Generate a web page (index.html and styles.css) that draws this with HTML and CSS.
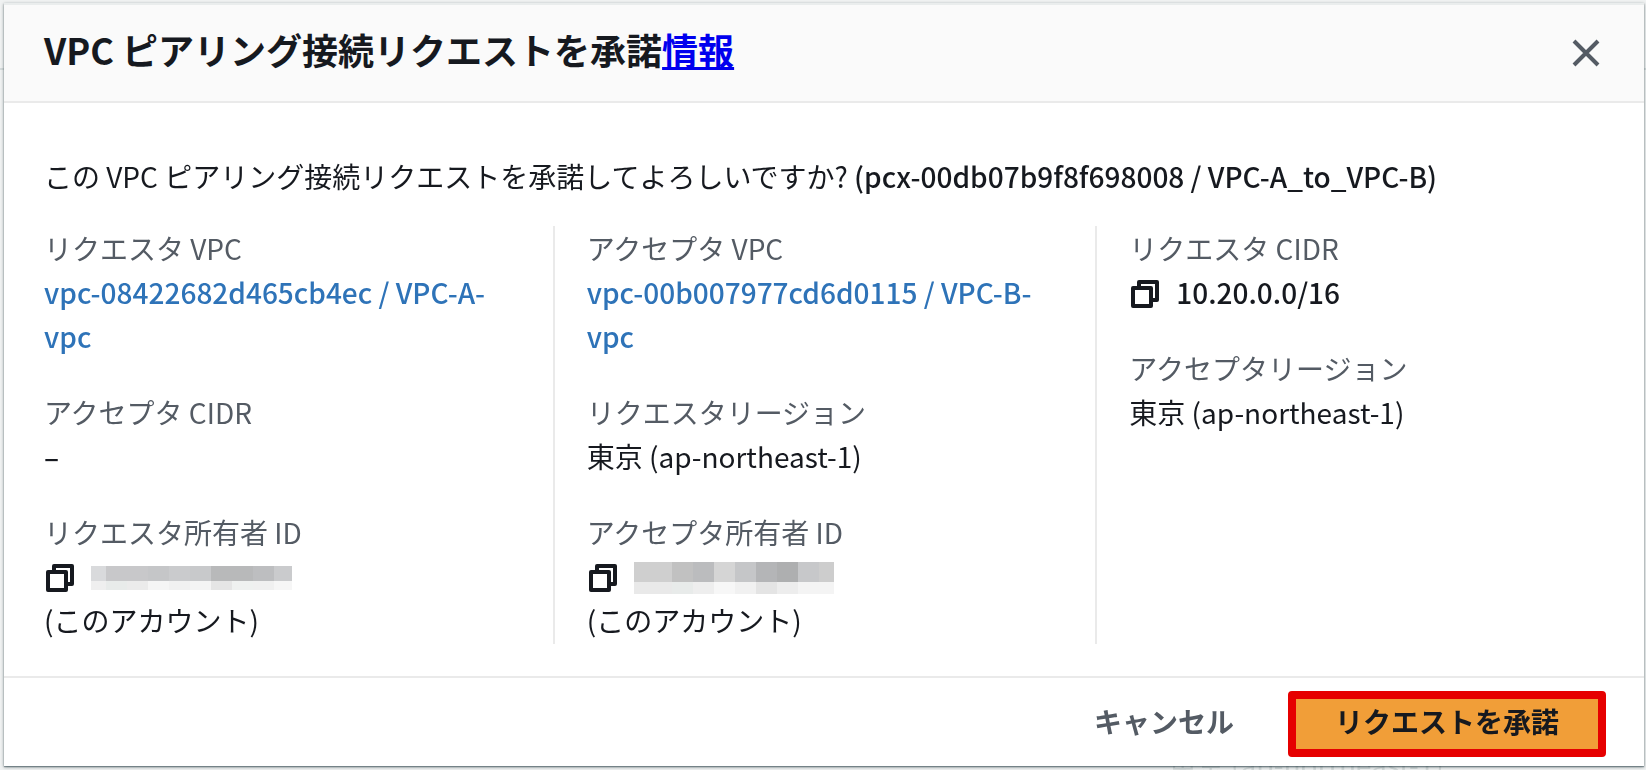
FILE: index.html
```
<!DOCTYPE html>
<html lang="ja">
<head>
    <meta charset="UTF-8">
    <meta name="viewport" content="width=device-width, initial-scale=1.0">
    <title>VPC ピアリング接続リクエストを承諾</title>
    <link rel="stylesheet" href="styles.css">
</head>
<body>
    <svg class="sprite" aria-hidden="true">
        <symbol id="copy" viewBox="0 0 32 32">
            <path d="M10 11V4h18v18h-6M4 10h18v18H4z"/>
        </symbol>
    </svg>

    <!-- page content showing from behind the dialog -->
    <div class="behind" aria-hidden="true">東京 (ap-northeast-1)</div>

    <div class="modal" role="dialog" aria-labelledby="title">
        <header class="modal-header">
            <h1 id="title">VPC ピアリング接続リクエストを承諾<a href="#">情報</a></h1>
            <button class="close" type="button" aria-label="閉じる">
                <svg viewBox="0 0 32 32"><path d="M4 4l24 24M28 4L4 28"/></svg>
            </button>
        </header>

        <main class="modal-body">
            <p class="question">この VPC ピアリング接続リクエストを承諾してよろしいですか? <span class="value">(pcx-00db07b9f8f698008 / VPC-A_to_VPC-B)</span></p>

            <div class="columns">
                <dl class="column">
                    <div>
                        <dt>リクエスタ VPC</dt>
                        <dd><a href="#">vpc-08422682d465cb4ec / VPC-A-vpc</a></dd>
                    </div>
                    <div>
                        <dt>アクセプタ CIDR</dt>
                        <dd class="value">–</dd>
                    </div>
                    <div>
                        <dt>リクエスタ所有者 ID</dt>
                        <dd class="copyable">
                            <button class="copy" type="button" aria-label="コピー"><svg><use href="#copy"/></svg></button>
                            <svg class="masked" width="201" height="24" aria-hidden="true">
                                <rect x="0" width="15" height="15" fill="#d9dadc"/>
                                <rect x="15" width="42" height="15" fill="#c8c8ca"/>
                                <rect x="57" width="21" height="15" fill="#c5c6c8"/>
                                <rect x="78" width="21" height="15" fill="#cacbcd"/>
                                <rect x="99" width="21" height="15" fill="#c8c9cb"/>
                                <rect x="120" width="42" height="15" fill="#b8b9ba"/>
                                <rect x="162" width="21" height="15" fill="#bdbec0"/>
                                <rect x="183" width="18" height="15" fill="#cacbcd"/>
                                <rect x="0" y="15" width="15" height="9" fill="#efefef"/>
                                <rect x="15" y="15" width="21" height="9" fill="#e8ebea"/>
                                <rect x="36" y="15" width="21" height="9" fill="#ebebeb"/>
                                <rect x="57" y="15" width="21" height="9" fill="#f5f5f5"/>
                                <rect x="78" y="15" width="21" height="9" fill="#f1f1f1"/>
                                <rect x="99" y="15" width="21" height="9" fill="#f4f4f4"/>
                                <rect x="120" y="15" width="21" height="9" fill="#e5e5e5"/>
                                <rect x="141" y="15" width="21" height="9" fill="#eff1f0"/>
                                <rect x="162" y="15" width="21" height="9" fill="#f0f0f0"/>
                                <rect x="183" y="15" width="18" height="9" fill="#f6f6f6"/>
                            </svg>
                        </dd>
                        <dd>(このアカウント)</dd>
                    </div>
                </dl>

                <dl class="column">
                    <div>
                        <dt>アクセプタ VPC</dt>
                        <dd><a href="#">vpc-00b007977cd6d0115 / VPC-B-vpc</a></dd>
                    </div>
                    <div>
                        <dt>リクエスタリージョン</dt>
                        <dd>東京 (ap-northeast-1)</dd>
                    </div>
                    <div>
                        <dt>アクセプタ所有者 ID</dt>
                        <dd class="copyable">
                            <button class="copy" type="button" aria-label="コピー"><svg><use href="#copy"/></svg></button>
                            <svg class="masked" width="200" height="32" aria-hidden="true">
                                <rect x="0" width="38" height="20" fill="#cfcfcf"/>
                                <rect x="38" width="21" height="20" fill="#c1c1c1"/>
                                <rect x="59" width="21" height="20" fill="#bbbcbe"/>
                                <rect x="80" width="21" height="20" fill="#d5d5d5"/>
                                <rect x="101" width="21" height="20" fill="#c5c6c8"/>
                                <rect x="122" width="21" height="20" fill="#b4b5b7"/>
                                <rect x="143" width="21" height="20" fill="#aeafb0"/>
                                <rect x="164" width="21" height="20" fill="#c7c8ca"/>
                                <rect x="185" width="15" height="20" fill="#cdcdcd"/>
                                <rect x="0" y="20" width="38" height="12" fill="#e9e9e9"/>
                                <rect x="38" y="20" width="21" height="12" fill="#e8ebea"/>
                                <rect x="59" y="20" width="21" height="12" fill="#eeeeee"/>
                                <rect x="80" y="20" width="21" height="12" fill="#f7f7f7"/>
                                <rect x="101" y="20" width="21" height="12" fill="#f1f1f1"/>
                                <rect x="122" y="20" width="21" height="12" fill="#e4e4e4"/>
                                <rect x="143" y="20" width="21" height="12" fill="#ededed"/>
                                <rect x="164" y="20" width="36" height="12" fill="#f4f4f4"/>
                            </svg>
                        </dd>
                        <dd>(このアカウント)</dd>
                    </div>
                </dl>

                <dl class="column">
                    <div>
                        <dt>リクエスタ CIDR</dt>
                        <dd class="copyable">
                            <button class="copy" type="button" aria-label="コピー"><svg><use href="#copy"/></svg></button>
                            <span class="value">10.20.0.0/16</span>
                        </dd>
                    </div>
                    <div>
                        <dt>アクセプタリージョン</dt>
                        <dd>東京 (ap-northeast-1)</dd>
                    </div>
                </dl>
            </div>
        </main>

        <footer class="modal-footer">
            <button class="cancel" type="button">キャンセル</button>
            <button class="accept" type="button">リクエストを承諾</button>
        </footer>
    </div>
</body>
</html>
```
FILE: styles.css
```
* {
    box-sizing: border-box;
}
body {
    font-family: "Noto Sans CJK JP", sans-serif;
    font-size: 28px;
    line-height: 44px;
    margin: 0;
    padding: 3px 2px 5px 4px;
    background: linear-gradient(#d5dbdb, #d5dbdb) 0 68px / 100% 2px no-repeat #f0f2f2;
    color: #16191f;
    overflow: hidden;
}
h1, p, dl, dd {
    margin: 0;
}
button {
    font: inherit;
    color: inherit;
    padding: 0;
    border: 0;
    background: none;
    cursor: pointer;
}
svg {
    display: block;
}
.sprite {
    display: none;
}
.behind {
    position: fixed;
    left: 71%;
    bottom: -16px;
    color: #d5dbdb;
}
.modal {
    position: relative;
    background: #fff;
    border-top: 2px solid #eaeded;
    box-shadow: 0 1px 1px rgba(0, 28, 36, 0.3), 0 1px 3px rgba(0, 28, 36, 0.5);
}
.modal-header {
    display: flex;
    align-items: flex-start;
    justify-content: space-between;
    padding: 20px 42px 20px 40px;
    background: #fafafa;
    border-bottom: 2px solid #eaeaea;
}
.modal-header h1 {
    font-size: 36px;
    line-height: 48px;
    font-weight: 700;
}
.modal-header a {
    color: #0000ee;
}
.close {
    padding: 12px 0;
}
.close svg {
    width: 32px;
    height: 32px;
    fill: none;
    stroke: #545b64;
    stroke-width: 4;
}
.modal-body {
    padding: 51px 40px 32px;
}
.question {
    margin-bottom: 28px;
}
.value {
    font-weight: 500;
}
.columns {
    display: flex;
    gap: 34px;
}
.column {
    box-sizing: content-box;
    flex: 1 1 0;
    display: flex;
    flex-direction: column;
    gap: 32px;
    padding-bottom: 2px;
}
.column + .column {
    border-left: 2px solid #eaeaea;
    padding-left: 32px;
}
.column dt {
    color: #545b64;
}
.column a {
    color: #2e73b8;
    font-weight: 500;
    text-decoration: none;
}
.copyable {
    display: flex;
    align-items: center;
    gap: 15px;
    height: 44px;
}
.copy,
.masked {
    margin-top: 4px;
}
.copy svg {
    width: 32px;
    height: 32px;
    fill: none;
    stroke: #16191f;
    stroke-width: 4;
    stroke-linejoin: round;
}
.masked {
    shape-rendering: crispEdges;
}
.modal-footer {
    display: flex;
    align-items: baseline;
    justify-content: flex-end;
    gap: 54px;
    padding: 13px 38px 9px;
    border-top: 2px solid #eaeaea;
    font-weight: 700;
}
.cancel {
    color: #545b64;
}
.accept {
    padding: 0 39px 6px;
    background: #f19e38;
    border: 8px solid #e60000;
    border-radius: 4px;
}
```
